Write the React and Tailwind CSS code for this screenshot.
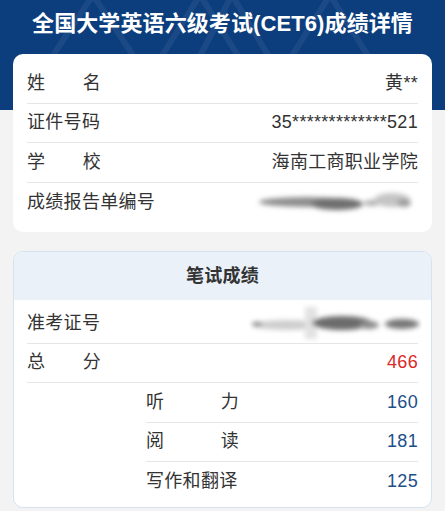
import React from "react";

const font = { fontFamily: '"Liberation Sans", "Noto Sans CJK SC", "Noto Sans", sans-serif' };

function Label4({ a, b }) {
  return (
    <span className="flex w-[74px] justify-between">
      <span>{a}</span>
      <span>{b}</span>
    </span>
  );
}

function Label5({ a, b }) {
  return (
    <span className="flex w-[93px] justify-between">
      <span>{a}</span>
      <span>{b}</span>
    </span>
  );
}

function Smudge1() {
  return (
    <svg width="170" height="30" viewBox="0 0 170 30">
      <defs>
        <filter id="b1" x="-20%" y="-50%" width="140%" height="200%">
          <feGaussianBlur stdDeviation="2.6" />
        </filter>
      </defs>
      <g filter="url(#b1)">
        <ellipse cx="55" cy="14" rx="48" ry="5" fill="#8e8e8e" />
        <ellipse cx="85" cy="16" rx="26" ry="6" fill="#6e6e6e" />
        <ellipse cx="120" cy="15" rx="9" ry="3" fill="#b0b0b0" />
        <ellipse cx="140" cy="12" rx="18" ry="7" fill="#c4c4c4" />
        <ellipse cx="152" cy="15" rx="7" ry="4" fill="#9c9c9c" />
      </g>
    </svg>
  );
}

function Smudge2() {
  return (
    <svg width="175" height="40" viewBox="0 0 175 40">
      <defs>
        <filter id="b2" x="-20%" y="-50%" width="140%" height="200%">
          <feGaussianBlur stdDeviation="2.6" />
        </filter>
      </defs>
      <g filter="url(#b2)">
        <ellipse cx="40" cy="22" rx="35" ry="5" fill="#cdcdcd" />
        <ellipse cx="10" cy="21" rx="5" ry="2" fill="#7a7a7a" />
        <rect x="58" y="4" width="12" height="32" fill="#e2e2e2" />
        <ellipse cx="95" cy="20" rx="30" ry="7" fill="#6c6c6c" />
        <ellipse cx="122" cy="22" rx="10" ry="4" fill="#8c8c8c" />
        <ellipse cx="155" cy="21" rx="17" ry="5" fill="#767676" />
      </g>
    </svg>
  );
}

function Row({ children, last }) {
  return (
    <div
      className={
        "flex h-[39.5px] items-center justify-between " +
        (last ? "" : "border-b border-[#e6e6e6]")
      }
    >
      {children}
    </div>
  );
}

export default function App() {
  return (
    <div
      className="min-h-[511px] w-full bg-[#f3f3f3] text-[18px] tracking-[0.3px] text-[#333333]"
      style={font}
    >
      <div className="relative h-[110px] overflow-hidden bg-[#0c3e7e]">
        <svg
          className="absolute left-0 top-0"
          width="445"
          height="110"
          viewBox="0 0 445 110"
        >
          <g fill="none" stroke="rgba(255,255,255,0.06)" strokeWidth="6">
            <path d="M40 75 L93 -5 L146 75" />
            <path d="M150 75 L200 -5 L250 75" />
            <path d="M190 75 L232 -5 L280 75" />
            <path d="M280 75 L330 -5 L380 75" />
          </g>
        </svg>
        <h1 className="relative pt-[9px] text-center text-[22px] font-bold leading-[30px] tracking-[0.1px] text-white">
          全国大学英语六级考试(CET6)成绩详情
        </h1>
      </div>

      <div className="relative mx-[13px] -mt-[56px] rounded-[10px] bg-white px-[14px] py-[10px]">
        <Row>
          <Label4 a="姓" b="名" />
          <span>黄**</span>
        </Row>
        <Row>
          <span>证件号码</span>
          <span>35*************521</span>
        </Row>
        <Row>
          <Label4 a="学" b="校" />
          <span>海南工商职业学院</span>
        </Row>
        <Row last>
          <span>成绩报告单编号</span>
          <span className="-mr-[4px] mt-[2px]">
            <Smudge1 />
          </span>
        </Row>
      </div>

      <div className="mx-[13px] mt-[19px] overflow-hidden rounded-[10px] border border-[#d5e3f1] bg-white">
        <div className="flex h-[48px] items-center justify-center bg-[#eaf1f9] font-bold">
          笔试成绩
        </div>
        <div className="px-[13px] pb-[5px] pt-[4px]">
          <Row>
            <span>准考证号</span>
            <span className="-mr-[4px]">
              <Smudge2 />
            </span>
          </Row>
          <Row>
            <Label4 a="总" b="分" />
            <span className="text-[#db2828]">466</span>
          </Row>
          <div className="ml-[119px]">
            <Row>
              <Label5 a="听" b="力" />
              <span className="text-[#1d4f88]">160</span>
            </Row>
            <Row>
              <Label5 a="阅" b="读" />
              <span className="text-[#1d4f88]">181</span>
            </Row>
            <Row last>
              <span>写作和翻译</span>
              <span className="text-[#1d4f88]">125</span>
            </Row>
          </div>
        </div>
      </div>
    </div>
  );
}
